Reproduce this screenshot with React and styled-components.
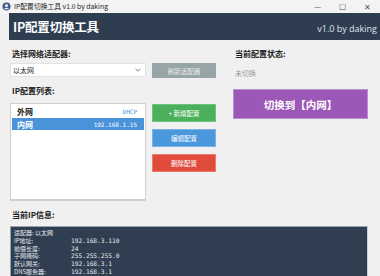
import React, { useState } from "react";
import styled, { createGlobalStyle } from "styled-components";

const GlobalStyle = createGlobalStyle`
  html, body {
    margin: 0;
    padding: 0;
    background: #f0f0f0;
    font-family: "Noto Sans CJK SC", "Noto Sans", sans-serif;
  }
`;

const Window = styled.div`
  width: 380px;
  height: 276px;
  overflow: hidden;
  background: #f0f0f0;
  display: flex;
  flex-direction: column;
  & > * {
    flex-shrink: 0;
  }
`;

const TitleBar = styled.div`
  height: 13px;
  display: flex;
  align-items: center;
  padding: 0 0 0 2px;
  background: #f3f3f3;
  font-size: 6.8px;
  color: #222;
  gap: 3px;
`;

const TitleText = styled.span`
  flex: 1;
  line-height: 1;
`;

const WinControls = styled.div`
  display: flex;
  align-items: center;
  color: #555;
  font-size: 8px;
  span {
    width: 25px;
    text-align: center;
  }
`;

const Header = styled.div`
  margin-left: 9px;
  height: 27px;
  background: #2e3e50;
  display: flex;
  align-items: center;
  justify-content: space-between;
  padding: 0 3px 0 4px;
`;

const HeaderTitle = styled.div`
  color: #fff;
  font-weight: 700;
  font-size: 12.5px;
  letter-spacing: -0.2px;
`;

const Version = styled.div`
  color: #dfe4ea;
  font-family: "Open Sans", "Noto Sans", sans-serif;
  font-size: 9px;
  padding-top: 3px;
`;

const Main = styled.div`
  display: grid;
  grid-template-columns: 206px 135px;
  column-gap: 17px;
  padding: 8px 0 0 10px;
`;

const Column = styled.div`
  display: flex;
  flex-direction: column;
`;

const Label = styled.div`
  font-size: 8px;
  font-weight: 700;
  color: #222;
  height: 12px;
  line-height: 12px;
  padding-left: 2px;
  margin-top: ${(p) => p.top || 0}px;
  margin-bottom: ${(p) => p.gap || 3}px;
`;

const Row = styled.div`
  display: flex;
  gap: 6px;
  align-items: flex-start;
`;

const Combo = styled.div`
  width: 136px;
  height: 14px;
  box-sizing: border-box;
  background: #fff;
  border: 1px solid #e2e2e2;
  display: flex;
  align-items: center;
  justify-content: space-between;
  padding: 0 4px 0 2px;
  font-size: 7px;
  color: #222;
`;

const Btn = styled.div`
  width: 64px;
  height: ${(p) => p.h || 18}px;
  box-sizing: border-box;
  background: ${(p) => p.bg};
  color: ${(p) => p.fg || "#fff"};
  border: 1px solid ${(p) => p.border || "transparent"};
  font-size: 6.5px;
  display: flex;
  align-items: center;
  justify-content: center;
`;

const ListBox = styled.div`
  width: 137px;
  height: 98px;
  box-sizing: border-box;
  background: #fff;
  border: 1px solid #cfcfcf;
  border-bottom-width: 2px;
  padding: 1px 1px;
`;

const ListItem = styled.div`
  height: 12px;
  display: flex;
  align-items: center;
  justify-content: space-between;
  padding: 0 7px 0 5px;
  background: ${(p) => (p.selected ? "#4a93d8" : "transparent")};
  color: ${(p) => (p.selected ? "#fff" : "#222")};
  margin-bottom: 1px;
`;

const ItemName = styled.span`
  font-size: 8px;
  font-weight: 700;
`;

const ItemMeta = styled.span`
  font-family: "DejaVu Sans Mono", "Liberation Mono", monospace;
  font-size: 6px;
  color: ${(p) => (p.selected ? "#fff" : "#4a90d9")};
`;

const ButtonStack = styled.div`
  display: flex;
  flex-direction: column;
  gap: 7px;
  padding-top: 1px;
`;

const Status = styled.div`
  font-size: 7px;
  color: #9a9a9a;
  padding-left: 2px;
  margin: 5px 0 11px;
  height: 10px;
  line-height: 10px;
`;

const SwitchBtn = styled.div`
  height: 30px;
  box-sizing: border-box;
  background: #9b58b6;
  border: 1px solid #b98fcc;
  color: #fff;
  font-size: 10.5px;
  font-weight: 700;
  display: flex;
  align-items: center;
  justify-content: center;
`;

const InfoSection = styled.div`
  padding: 8px 12px 0 10px;
`;

const InfoBox = styled.div`
  background: #2f3e51;
  border: 1px solid #9aa3ad;
  border-right-color: #c9cdd2;
  height: 60px;
  padding: 2px 3px;
  color: #e8ecef;
  font-size: 6px;
  line-height: 7.8px;
`;

const InfoLine = styled.div`
  display: flex;
  height: 7.8px;
  white-space: pre;
`;

const InfoKey = styled.span`
  width: 57px;
  font-family: "Noto Sans CJK SC", "DejaVu Sans Mono", monospace;
`;

const InfoVal = styled.span`
  font-family: "DejaVu Sans Mono", "Liberation Mono", monospace;
  font-size: 6.2px;
`;

const AppIcon = () => (
  <svg width="9" height="9" viewBox="0 0 10 10">
    <circle cx="5" cy="5" r="4.5" fill="#3b5a8a" />
    <circle cx="5" cy="4" r="1.8" fill="#dce6f2" />
    <path d="M1.8 8 Q5 5 8.2 8" fill="#dce6f2" />
  </svg>
);

const Chevron = () => (
  <svg width="6" height="4" viewBox="0 0 6 4">
    <path d="M0.5 0.8 L3 3.2 L5.5 0.8" stroke="#666" strokeWidth="0.8" fill="none" />
  </svg>
);

const configs = [
  { name: "外网", meta: "DHCP" },
  { name: "内网", meta: "192.168.1.15" },
];

const info = [
  ["适配器: 以太网", ""],
  ["IP地址:", "192.168.3.110"],
  ["前缀长度:", "24"],
  ["子网掩码:", "255.255.255.0"],
  ["默认网关:", "192.168.3.1"],
  ["DNS服务器:", "192.168.3.1"],
];

export default function App() {
  const [selected, setSelected] = useState(1);

  return (
    <>
      <GlobalStyle />
      <Window>
        <TitleBar>
          <AppIcon />
          <TitleText>IP配置切换工具 v1.0 by daking</TitleText>
          <WinControls>
            <span>—</span>
            <span>☐</span>
            <span>✕</span>
          </WinControls>
        </TitleBar>
        <Header>
          <HeaderTitle>IP配置切换工具</HeaderTitle>
          <Version>v1.0 by daking</Version>
        </Header>
        <Main>
          <Column>
            <Label>选择网络适配器:</Label>
            <Row>
              <Combo>
                <span>以太网</span>
                <Chevron />
              </Combo>
              <Btn bg="#97a5a6" fg="#e8ecec" h={15}>
                刷新适配器
              </Btn>
            </Row>
            <Label top={7} gap={6}>
              IP配置列表:
            </Label>
            <Row>
              <ListBox>
                {configs.map((c, i) => (
                  <ListItem key={c.name} selected={i === selected} onClick={() => setSelected(i)}>
                    <ItemName>{c.name}</ItemName>
                    <ItemMeta selected={i === selected}>{c.meta}</ItemMeta>
                  </ListItem>
                ))}
              </ListBox>
              <ButtonStack>
                <Btn bg="#4bb05c" border="#6fc47d">+ 新增配置</Btn>
                <Btn bg="#4a97dc" border="#7ab4e6">编辑配置</Btn>
                <Btn bg="#e04b3b" border="#ea7a6e">删除配置</Btn>
              </ButtonStack>
            </Row>
          </Column>
          <Column>
            <Label>当前配置状态:</Label>
            <Status>未切换</Status>
            <SwitchBtn>切换到【内网】</SwitchBtn>
          </Column>
        </Main>
        <InfoSection>
          <Label gap={5}>当前IP信息:</Label>
          <InfoBox>
            {info.map(([k, v]) => (
              <InfoLine key={k}>
                <InfoKey>{k}</InfoKey>
                <InfoVal>{v}</InfoVal>
              </InfoLine>
            ))}
          </InfoBox>
        </InfoSection>
      </Window>
    </>
  );
}
